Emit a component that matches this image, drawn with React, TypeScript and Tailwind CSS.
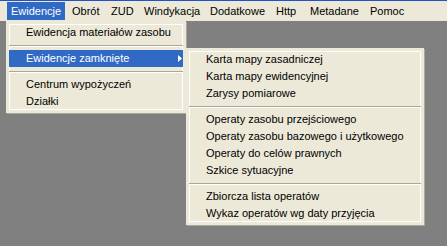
import React from "react";

const menus: { label: string; w: string }[] = [
  { label: "Ewidencje", w: "w-[61px]" },
  { label: "Obrót", w: "w-[39px]" },
  { label: "ZUD", w: "w-[33px]" },
  { label: "Windykacja", w: "w-[66px]" },
  { label: "Dodatkowe", w: "w-[66px]" },
  { label: "Http", w: "w-[34px]" },
  { label: "Metadane", w: "w-[60px]" },
  { label: "Pomoc", w: "w-[40px]" },
];

function Sep() {
  return (
    <div className="h-[9px] flex flex-col justify-center">
      <div className="h-px bg-[#ACA899]" />
      <div className="h-px bg-white" />
    </div>
  );
}

function Item({ label, active, arrow }: { label: string; active?: boolean; arrow?: boolean }) {
  return (
    <div
      className={
        "h-[17px] flex items-center pl-[17px] pr-[4px] relative " +
        (active ? "bg-[#316AC5] text-white" : "text-black")
      }
    >
      <span className="leading-none">{label}</span>
      {arrow && (
        <svg className="absolute right-[1px] top-[5px]" width="4" height="7" viewBox="0 0 4 7">
          <path d="M0 0 L4 3.5 L0 7 Z" fill={active ? "#fff" : "#000"} />
        </svg>
      )}
    </div>
  );
}

export default function App() {
  return (
    <div
      className="w-[447px] h-[246px] bg-[#808080] relative overflow-hidden text-[11px]"
      style={{ fontFamily: '"Liberation Sans", Arial, sans-serif' }}
    >
      <div className="h-px bg-[#2453C9]" />
      <div className="h-[20px] bg-[#ECE9D8] flex items-center pl-[7px]">
        {menus.map((m, i) => (
          <div key={m.label} className={"h-[18px] flex items-center " + m.w}>
            <div
              className={
                "h-[18px] flex items-center pl-[4px] " +
                (i === 0 ? "w-[58px] bg-[#316AC5] text-white" : "text-black")
              }
            >
              {m.label}
            </div>
          </div>
        ))}
      </div>

      <div className="absolute left-[6px] top-[21px] w-[180px] bg-[#ECE9D8] border-[3px] border-[#ECE9D8] shadow-[inset_0_0_0_1px_#fff,1px_1px_0_0_#ACA899]">
        <Item label="Ewidencja materiałów zasobu" />
        <Sep />
        <Item label="Ewidencje zamknięte" active arrow />
        <Sep />
        <Item label="Centrum wypożyczeń" />
        <Item label="Działki" />
      </div>

      <div className="absolute left-[186px] top-[48px] w-[238px] bg-[#ECE9D8] border-[3px] border-[#ECE9D8] shadow-[inset_0_0_0_1px_#fff,1px_1px_0_0_#ACA899]">
        <Item label="Karta mapy zasadniczej" />
        <Item label="Karta mapy ewidencyjnej" />
        <Item label="Zarysy pomiarowe" />
        <Sep />
        <Item label="Operaty zasobu przejściowego" />
        <Item label="Operaty zasobu bazowego i użytkowego" />
        <Item label="Operaty do celów prawnych" />
        <Item label="Szkice sytuacyjne" />
        <Sep />
        <Item label="Zbiorcza lista operatów" />
        <Item label="Wykaz operatów wg daty przyjęcia" />
      </div>
    </div>
  );
}
